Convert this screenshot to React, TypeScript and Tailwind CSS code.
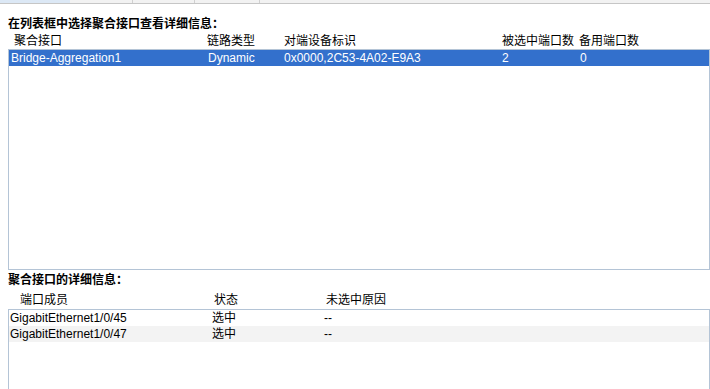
import React from "react";

type AggRow = {
  name: string;
  linkType: string;
  peer: string;
  selected: string;
  standby: string;
};

type MemberRow = {
  port: string;
  state: string;
  reason: string;
};

const aggRows: AggRow[] = [
  {
    name: "Bridge-Aggregation1",
    linkType: "Dynamic",
    peer: "0x0000,2C53-4A02-E9A3",
    selected: "2",
    standby: "0",
  },
];

const memberRows: MemberRow[] = [
  { port: "GigabitEthernet1/0/45", state: "选中", reason: "--" },
  { port: "GigabitEthernet1/0/47", state: "选中", reason: "--" },
];

const font = "font-['Liberation_Sans','Noto_Sans_CJK_SC',sans-serif]";

export default function App() {
  return (
    <div className={`w-[710px] h-[389px] bg-white text-[12px] text-black overflow-hidden flex flex-col ${font}`}>
      {/* tab strip */}
      <div className="h-[4px] shrink-0 flex bg-[#f2f2f2] border-b border-[#c6c6c6]">
        <div className="w-[70px] bg-[#dce8f5]" />
        <div className="w-[63px] border-r border-[#d0d0d0]" />
        <div className="w-[62px] border-r border-[#d0d0d0]" />
        <div className="w-[65px] border-r border-[#d0d0d0]" />
      </div>

      {/* aggregation list */}
      <div className="pl-[8px] pt-[12px] h-[16px] box-content leading-[16px] font-bold">
        在列表框中选择聚合接口查看详细信息：
      </div>
      <div className="flex h-[16px] leading-[16px] pt-[1px] box-content">
        <div className="w-[207px] pl-[14px]">聚合接口</div>
        <div className="w-[77px]">链路类型</div>
        <div className="w-[218px]">对端设备标识</div>
        <div className="w-[77px]">被选中端口数</div>
        <div>备用端口数</div>
      </div>
      <div className="ml-[8px] h-[221px] shrink-0 border border-[#b4c4d6] border-t-[#b4c4d6]">
        {aggRows.map((r) => (
          <div
            key={r.name}
            className="flex h-[16px] leading-[16px] bg-[#3370cc] text-white"
          >
            <div className="w-[199px] pl-[2px]">{r.name}</div>
            <div className="w-[76px]">{r.linkType}</div>
            <div className="w-[218px]">{r.peer}</div>
            <div className="w-[78px]">{r.selected}</div>
            <div>{r.standby}</div>
          </div>
        ))}
      </div>

      {/* member detail */}
      <div className="pl-[8px] pt-[2px] h-[16px] box-content leading-[16px] font-bold">
        聚合接口的详细信息：
      </div>
      <div className="flex h-[16px] leading-[16px] pt-[4px] pb-[1px] box-content">
        <div className="w-[214px] pl-[20px]">端口成员</div>
        <div className="w-[112px]">状态</div>
        <div>未选中原因</div>
      </div>
      <div className="ml-[8px] flex-1 border border-b-0 border-[#b4c4d6]">
        {memberRows.map((r, i) => (
          <div
            key={r.port}
            className={`flex h-[16px] leading-[16px] ${i % 2 === 1 ? "bg-[#f3f3f3]" : "bg-white"}`}
          >
            <div className="w-[203px] pl-[1px]">{r.port}</div>
            <div className="w-[112px]">{r.state}</div>
            <div>{r.reason}</div>
          </div>
        ))}
      </div>
    </div>
  );
}
